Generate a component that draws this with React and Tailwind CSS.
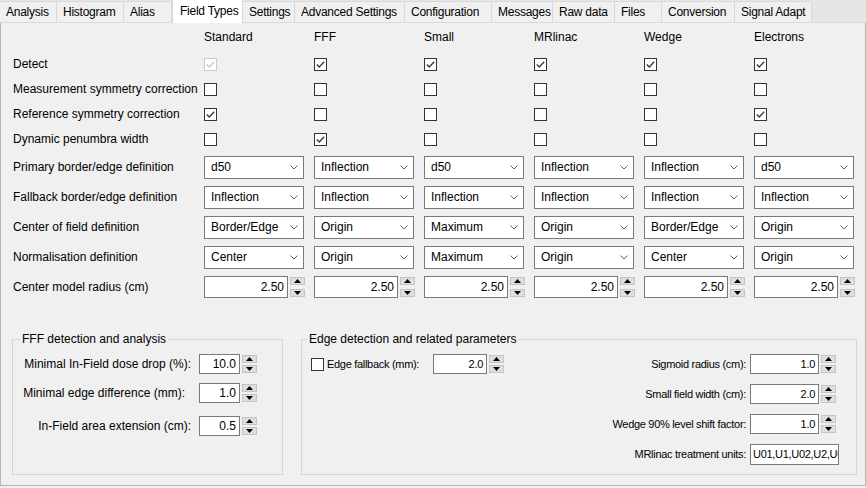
import React from 'react';

const cols = ['Standard', 'FFF', 'Small', 'MRlinac', 'Wedge', 'Electrons'];

const tabs = [
  { name: 'Analysis', w: 'w-[57px]' },
  { name: 'Histogram', w: 'w-[67px]' },
  { name: 'Alias', w: 'w-[48px]' },
  { name: 'Field Types', w: 'w-[71px]', active: true },
  { name: 'Settings', w: 'w-[52px]' },
  { name: 'Advanced Settings', w: 'w-[110px]' },
  { name: 'Configuration', w: 'w-[87px]' },
  { name: 'Messages', w: 'w-[61px]' },
  { name: 'Raw data', w: 'w-[62px]' },
  { name: 'Files', w: 'w-[47px]' },
  { name: 'Conversion', w: 'w-[73px]' },
  { name: 'Signal Adapt', w: 'w-[77px]' },
];

const checkRows = [
  { label: 'Detect', values: [1, 1, 1, 1, 1, 1], disabledFirst: true },
  { label: 'Measurement symmetry correction', values: [0, 0, 0, 0, 0, 0] },
  { label: 'Reference symmetry correction', values: [1, 0, 0, 0, 0, 1] },
  { label: 'Dynamic penumbra width', values: [0, 1, 0, 0, 0, 0] },
];

const comboRows = [
  { label: 'Primary border/edge definition', values: ['d50', 'Inflection', 'd50', 'Inflection', 'Inflection', 'd50'] },
  { label: 'Fallback border/edge definition', values: ['Inflection', 'Inflection', 'Inflection', 'Inflection', 'Inflection', 'Inflection'] },
  { label: 'Center of field definition', values: ['Border/Edge', 'Origin', 'Maximum', 'Origin', 'Border/Edge', 'Origin'] },
  { label: 'Normalisation definition', values: ['Center', 'Origin', 'Maximum', 'Origin', 'Center', 'Origin'] },
];

function Check({ checked, disabled }) {
  return (
    <span className={`flex h-[13px] w-[13px] shrink-0 items-center justify-center border bg-white ${disabled ? 'border-[#cccccc]' : 'border-[#333333]'}`}>
      {checked ? (
        <svg width="11" height="11" viewBox="0 0 11 11">
          <path d="M1.8 5.4 L4.3 7.9 L9.2 2.8" fill="none" stroke={disabled ? '#c8c8c8' : '#3a3a3a'} strokeWidth="1.4" />
        </svg>
      ) : null}
    </span>
  );
}

function Combo({ value }) {
  return (
    <div className="flex h-[23px] w-[100px] items-center justify-between border border-[#7a7a7a] bg-white pl-[6px] pr-[5px]">
      <span>{value}</span>
      <svg width="8" height="5" viewBox="0 0 8 5">
        <path d="M0.5 0.5 L4 4 L7.5 0.5" fill="none" stroke="#606060" strokeWidth="1" />
      </svg>
    </div>
  );
}

function Arrows({ tall }) {
  return (
    <div className={`ml-[2px] flex w-[15px] flex-col justify-between ${tall ? 'h-[20px]' : 'h-[18px]'}`}>
      <div className="flex h-[8px] items-center justify-center border border-[#c4c4c4] bg-[#dedede]">
        <svg width="7" height="4" viewBox="0 0 7 4">
          <path d="M0 4 L3.5 0 L7 4 Z" fill="#000" />
        </svg>
      </div>
      <div className="flex h-[8px] items-center justify-center border border-[#c4c4c4] bg-[#dedede]">
        <svg width="7" height="4" viewBox="0 0 7 4">
          <path d="M0 0 L3.5 4 L7 0 Z" fill="#000" />
        </svg>
      </div>
    </div>
  );
}

function Spin({ value, w, h }) {
  return (
    <div className="flex items-center">
      <div className={`flex items-center justify-end border border-[#7a7a7a] bg-white pr-[3px] ${w} ${h}`}>
        {value}
      </div>
      <Arrows tall={h === 'h-[22px]'} />
    </div>
  );
}

export default function App() {
  return (
    <div className="h-[488px] w-[866px] overflow-hidden bg-[#f0f0f0] font-['Liberation_Sans',Arial,sans-serif] text-[12px] leading-[15px] text-black">
      <div className="flex h-[23px] items-end border-b border-[#d9d9d9] bg-[#e6e6e6] tracking-[-0.25px]">
        {tabs.map((t) =>
          t.active ? (
            <div key={t.name} className={`-mb-px flex h-[24px] items-start border-x border-t border-[#d9d9d9] bg-white pl-[7px] pt-[4px] ${t.w}`}>
              {t.name}
            </div>
          ) : (
            <div key={t.name} className={`flex h-[21px] items-center border-r border-t border-[#d9d9d9] bg-[#f0f0f0] pl-[6px] pt-[1px] ${t.w}`}>
              {t.name}
            </div>
          )
        )}
      </div>

      <div className="h-[463px] border-x border-b border-[#b4b4b4] pt-[4px]">
        <div className="flex h-[20px] items-center">
          <div className="w-[203px]" />
          {cols.map((c) => (
            <div key={c} className="w-[110px]">{c}</div>
          ))}
        </div>

        <div className="mt-[5px]">
          {checkRows.map((r) => (
            <div key={r.label} className="flex h-[25px] items-center">
              <div className="w-[203px] pl-[12px]">{r.label}</div>
              {r.values.map((v, i) => (
                <div key={i} className="w-[110px]">
                  <Check checked={!!v} disabled={r.disabledFirst && i === 0} />
                </div>
              ))}
            </div>
          ))}
        </div>

        {comboRows.map((r) => (
          <div key={r.label} className="flex h-[30px] items-center">
            <div className="w-[203px] pl-[12px]">{r.label}</div>
            {r.values.map((v, i) => (
              <div key={i} className="w-[110px]">
                <Combo value={v} />
              </div>
            ))}
          </div>
        ))}

        <div className="flex h-[30px] items-center">
          <div className="w-[203px] pl-[12px]">Center model radius (cm)</div>
          {cols.map((c) => (
            <div key={c} className="w-[110px]">
              <Spin value="2.50" w="w-[84px]" h="h-[22px]" />
            </div>
          ))}
        </div>

        <div className="mt-[29px] flex pl-[11px]">
          <fieldset className="h-[144px] w-[271px] border border-[#d5d5d5]">
            <legend className="ml-[7px] px-[2px] leading-[16px]">FFF detection and analysis</legend>
            <div className="mt-[7px] flex h-[20px] items-center">
              <div className="w-[178px] text-right">Minimal In-Field dose drop (%):</div>
              <div className="ml-[8px]">
                <Spin value="10.0" w="w-[41px]" h="h-[20px]" />
              </div>
            </div>
            <div className="mt-[9px] flex h-[20px] items-center">
              <div className="w-[172px] text-right">Minimal edge difference (mm):</div>
              <div className="ml-[14px]">
                <Spin value="1.0" w="w-[41px]" h="h-[20px]" />
              </div>
            </div>
            <div className="mt-[13px] flex h-[20px] items-center">
              <div className="w-[178px] text-right">In-Field area extension (cm):</div>
              <div className="ml-[8px]">
                <Spin value="0.5" w="w-[41px]" h="h-[20px]" />
              </div>
            </div>
          </fieldset>

          <fieldset className="ml-[18px] h-[144px] w-[556px] border border-[#d5d5d5]">
            <legend className="ml-[5px] px-[2px] leading-[16px]">Edge detection and related parameters</legend>
            <div className="flex justify-between text-[11px] tracking-[-0.3px]">
              <div className="mt-[7px] flex h-[20px] items-center pl-[9px]">
                <Check />
                <div className="ml-[3px] w-[106px]">Edge fallback (mm):</div>
                <Spin value="2.0" w="w-[54px]" h="h-[20px]" />
              </div>
              <div className="mt-[7px] flex flex-col items-end pr-[20px]">
                <div className="flex h-[20px] items-center">
                  <span className="mr-[4px]">Sigmoid radius (cm):</span>
                  <Spin value="1.0" w="w-[69px]" h="h-[20px]" />
                </div>
                <div className="mt-[10px] flex h-[20px] items-center">
                  <span className="mr-[4px]">Small field width (cm):</span>
                  <Spin value="2.0" w="w-[69px]" h="h-[20px]" />
                </div>
                <div className="mt-[10px] flex h-[20px] items-center">
                  <span className="mr-[4px]">Wedge 90% level shift factor:</span>
                  <Spin value="1.0" w="w-[69px]" h="h-[20px]" />
                </div>
                <div className="-mr-[3px] mt-[10px] flex h-[21px] items-center">
                  <span className="mr-[4px]">MRlinac treatment units:</span>
                  <div className="flex h-[21px] w-[89px] items-center overflow-hidden whitespace-nowrap border border-[#7a7a7a] bg-white pl-[2px]">
                    U01,U1,U02,U2,U03
                  </div>
                </div>
              </div>
            </div>
          </fieldset>
        </div>
      </div>
    </div>
  );
}
